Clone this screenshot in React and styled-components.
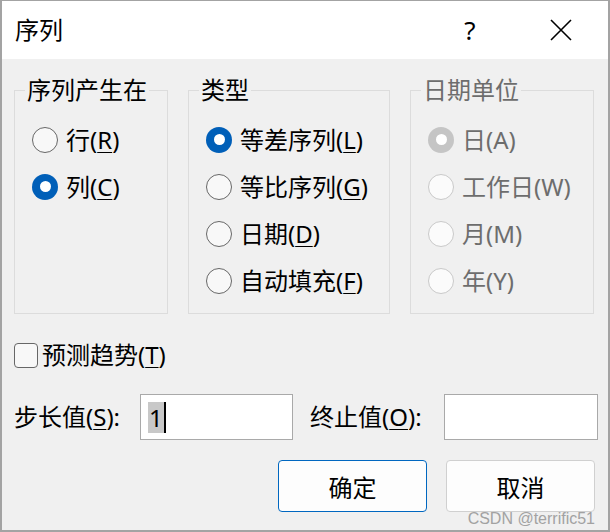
import React from 'react';
import styled, { createGlobalStyle } from 'styled-components';

const Global = createGlobalStyle`
    html, body {
        margin: 0;
        padding: 0;
        background: #ffffff;
    }
    * {
        box-sizing: border-box;
    }
`

const Dialog = styled.div`
    position: relative;
    width: 610px;
    height: 532px;
    background-color: #f0f0f0;
    border-style: solid;
    border-color: #a3a3a3;
    border-width: 1px 2px 2px 2px;
    display: flex;
    flex-direction: column;
    font-family: "Noto Sans", "Noto Sans CJK SC", sans-serif;
    font-size: 24px;
    color: #000000;
    overflow: hidden;
`

const TitleBar = styled.div`
    height: 58px;
    background-color: #ffffff;
    display: flex;
    align-items: center;
    padding: 0 0 0 13px;
    flex: none;
`

const Title = styled.span`
    flex: 1;
    font-size: 24px;
    line-height: 30px;
`

const HelpButton = styled.span`
    width: 40px;
    text-align: center;
    font-size: 26px;
    line-height: 30px;
    margin-right: 51px;
`

const CloseButton = styled.span`
    width: 40px;
    display: flex;
    justify-content: center;
    margin-right: 27px;
`

const Body = styled.div`
    flex: 1;
    display: flex;
    flex-direction: column;
    padding: 17px 12px 0 12px;
`

const Groups = styled.div`
    display: grid;
    grid-template-columns: 154px 202px 184px;
    column-gap: 20px;
    height: 238px;
`

const Group = styled.fieldset`
    margin: 0;
    padding: 0;
    min-width: 0;
    border: 1px solid #dcdcdc;
    display: flex;
    flex-direction: column;
`

const Legend = styled.legend`
    margin-left: 10px;
    padding: 0 2px;
    font-size: 24px;
    line-height: 28px;
    color: ${({$disabled}) => $disabled ? '#6d6d6d' : '#000000'};
`

const Options = styled.div`
    display: flex;
    flex-direction: column;
    padding: 12px 0 0 17px;
`

const Option = styled.label`
    height: 47px;
    display: flex;
    align-items: center;
    gap: 8px;
    line-height: 30px;
    white-space: nowrap;
    color: ${({$disabled}) => $disabled ? '#6d6d6d' : '#000000'};
`

const radioBorder = ({$checked, $disabled}) => {
    if ($checked) return 'none'
    return $disabled ? '1.5px solid #c9c9c9' : '1.5px solid #676767'
}

const radioFill = ({$checked, $disabled}) => {
    if ($checked) return $disabled ? '#c5c5c5' : '#005fb8'
    return $disabled ? '#fbfbfb' : '#f8f8f8'
}

const RadioMark = styled.span`
    width: 26px;
    height: 26px;
    flex: none;
    border-radius: 50%;
    border: ${radioBorder};
    background-color: ${radioFill};
    display: flex;
    align-items: center;
    justify-content: center;

    &::after {
        content: '';
        display: ${({$checked}) => $checked ? 'block' : 'none'};
        width: 11px;
        height: 11px;
        border-radius: 50%;
        background-color: #ffffff;
    }
`

const Key = styled.span`
    text-decoration: underline;
    text-underline-offset: 3px;
    text-decoration-thickness: 1px;
`

const CheckRow = styled.label`
    margin-top: 26px;
    height: 30px;
    display: flex;
    align-items: center;
    gap: 4px;
    line-height: 30px;
`

const CheckMark = styled.span`
    width: 24px;
    height: 25px;
    flex: none;
    border: 1.5px solid #676767;
    border-radius: 4px;
    background-color: #f8f8f8;
`

const FieldRow = styled.div`
    margin-top: 24px;
    height: 46px;
    display: flex;
    align-items: center;
`

const FieldLabel = styled.span`
    width: ${({$width}) => $width}px;
    margin-left: ${({$offset}) => $offset || 0}px;
    flex: none;
    line-height: 30px;
    white-space: nowrap;
`

const Field = styled.div`
    width: ${({$width}) => $width}px;
    height: 46px;
    flex: none;
    background-color: #ffffff;
    border: 1px solid #a9a9a9;
    display: flex;
    align-items: center;
    padding-left: 7px;
`

const Selected = styled.span`
    background-color: #c8c8c8;
    line-height: 31px;
    padding: 0 1px;
`

const Caret = styled.span`
    width: 2px;
    height: 31px;
    background-color: #000000;
`

const Buttons = styled.div`
    margin-top: 20px;
    display: flex;
    justify-content: flex-end;
    gap: 19px;
    padding-right: 1px;
`

const Button = styled.button`
    width: 149px;
    height: 52px;
    font-family: inherit;
    font-size: 24px;
    color: #000000;
    background-color: #fdfdfd;
    border: 1px solid ${({$primary}) => $primary ? '#0067c0' : '#d0d0d0'};
    border-radius: 4px;
    padding: 0;
`

const Watermark = styled.span`
    position: absolute;
    right: 13px;
    bottom: 2px;
    font-family: "Liberation Sans", Arial, sans-serif;
    font-size: 16px;
    line-height: 19px;
    color: #a2a2a2;
`

const Radio = ({checked, disabled, label, hotkey}) => (
    <Option $disabled={disabled}>
        <RadioMark $checked={checked} $disabled={disabled} />
        <span>
            {label}(
            {disabled ? hotkey : <Key>{hotkey}</Key>}
            )
        </span>
    </Option>
)

const groups = [
    {
        title: '序列产生在',
        items: [
            {label: '行', hotkey: 'R'},
            {label: '列', hotkey: 'C', checked: true}
        ]
    },
    {
        title: '类型',
        items: [
            {label: '等差序列', hotkey: 'L', checked: true},
            {label: '等比序列', hotkey: 'G'},
            {label: '日期', hotkey: 'D'},
            {label: '自动填充', hotkey: 'F'}
        ]
    },
    {
        title: '日期单位',
        disabled: true,
        items: [
            {label: '日', hotkey: 'A', checked: true},
            {label: '工作日', hotkey: 'W'},
            {label: '月', hotkey: 'M'},
            {label: '年', hotkey: 'Y'}
        ]
    }
]

const App = () => {
    return (
        <Dialog>
            <Global />
            <TitleBar>
                <Title>序列</Title>
                <HelpButton>?</HelpButton>
                <CloseButton>
                    <svg width="22" height="22" viewBox="0 0 22 22">
                        <path d="M1 1 L21 21 M21 1 L1 21" stroke="#000" strokeWidth="1.6" fill="none" />
                    </svg>
                </CloseButton>
            </TitleBar>
            <Body>
                <Groups>
                    {
                        groups.map((group) => (
                            <Group key={group.title}>
                                <Legend $disabled={group.disabled}>{group.title}</Legend>
                                <Options>
                                    {
                                        group.items.map((item) => (
                                            <Radio
                                                key={item.hotkey}
                                                label={item.label}
                                                hotkey={item.hotkey}
                                                checked={item.checked}
                                                disabled={group.disabled}
                                            />
                                        ))
                                    }
                                </Options>
                            </Group>
                        ))
                    }
                </Groups>
                <CheckRow>
                    <CheckMark />
                    <span>预测趋势(<Key>T</Key>)</span>
                </CheckRow>
                <FieldRow>
                    <FieldLabel $width={126}>步长值(<Key>S</Key>):</FieldLabel>
                    <Field $width={153}>
                        <Selected>1</Selected>
                        <Caret />
                    </Field>
                    <FieldLabel $width={134} $offset={17}>终止值(<Key>O</Key>):</FieldLabel>
                    <Field $width={154} />
                </FieldRow>
                <Buttons>
                    <Button $primary>确定</Button>
                    <Button>取消</Button>
                </Buttons>
            </Body>
            <Watermark>CSDN @terrific51</Watermark>
        </Dialog>
    );
};

export default App;
